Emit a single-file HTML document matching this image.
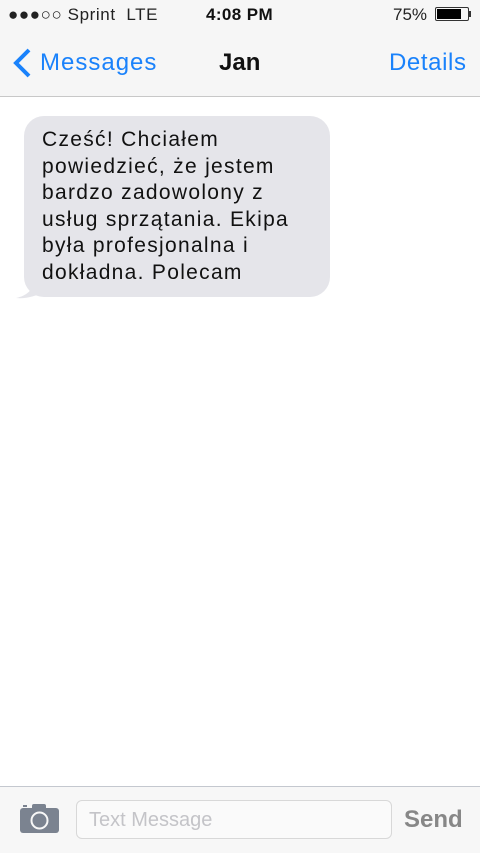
<!DOCTYPE html>
<html><head><meta charset="utf-8"><style>
body{margin:0;width:480px;height:852px;background:#fff;font-family:"Liberation Sans",Arial,sans-serif;position:relative;overflow:hidden}
.top{position:absolute;left:0;top:0;width:480px;height:96px;background:#f6f6f6;border-bottom:1px solid #c8c8c8}
.abs{position:absolute;white-space:nowrap}
.bubble{position:absolute;left:24px;top:116px;width:306px;height:181px;background:#e5e5ea;border-radius:20px}
.msg{position:absolute;left:42px;top:127px;font-size:21px;line-height:26.6px;color:#111;letter-spacing:1.3px;white-space:nowrap}
.bottom{position:absolute;left:0;top:786px;width:480px;height:66px;background:#f7f7f7;border-top:1px solid #c4c8cf}
</style></head><body>
<div class="top">
 <div class="abs" style="left:8px;top:5px;font-size:17px;color:#222;letter-spacing:0.6px">●●●○○ Sprint &nbsp;LTE</div>
 <div class="abs" style="left:206px;top:5px;font-size:17px;font-weight:bold;color:#111;letter-spacing:0.4px">4:08 PM</div>
 <div class="abs" style="left:393px;top:5px;font-size:17px;color:#222">75%</div>
 <div class="abs" style="left:435px;top:7px;width:34px;height:14px;border:1px solid #333;border-radius:2px;box-sizing:border-box;padding:1px"><div style="width:24px;height:10px;background:#000"></div></div>
 <div class="abs" style="left:469px;top:11px;width:2px;height:6px;background:#333"></div>
 <svg class="abs" style="left:11px;top:47px" width="22" height="32"><path d="M18 3 L5 16 L18 29" fill="none" stroke="#1a82fb" stroke-width="4"/></svg>
 <div class="abs" style="left:40px;top:49px;font-size:24px;color:#1a82fb;letter-spacing:1px">Messages</div>
 <div class="abs" style="left:219px;top:49px;font-size:24px;font-weight:bold;color:#111">Jan</div>
 <div class="abs" style="left:389px;top:49px;font-size:24px;color:#1a82fb;letter-spacing:0.6px">Details</div>
</div>
<div class="bubble"></div>
<svg class="abs" style="left:14px;top:278px" width="30" height="22"><path d="M22 0 C20 12 12 18 2 20 C12 21 22 18 30 14 Z" fill="#e5e5ea"/></svg>
<div class="msg">Cześć! Chciałem<br>powiedzieć, że jestem<br>bardzo zadowolony z<br>usług sprzątania. Ekipa<br>była profesjonalna i<br>dokładna. Polecam</div>
<div class="bottom">
 <svg class="abs" style="left:20px;top:16px" width="40" height="30"><rect x="0" y="5" width="39" height="25" rx="3" fill="#7b8390"/><rect x="12" y="1" width="14" height="6" rx="2" fill="#7b8390"/><rect x="3" y="2" width="4" height="2" fill="#7b8390"/><circle cx="19.5" cy="17.5" r="8" fill="none" stroke="#f7f7f7" stroke-width="2"/></svg>
 <div class="abs" style="left:76px;top:13px;width:316px;height:39px;border:1px solid #d8d8d8;border-radius:6px;background:#fafafa;box-sizing:border-box"></div>
 <div class="abs" style="left:89px;top:22px;font-size:20px;color:#c4c4c8">Text Message</div>
 <div class="abs" style="left:404px;top:19px;font-size:24px;font-weight:bold;color:#878787">Send</div>
</div>
</body></html>
